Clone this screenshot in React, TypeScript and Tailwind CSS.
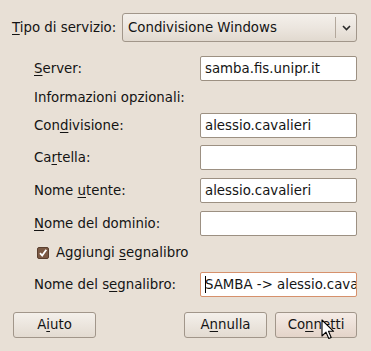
import React from "react";

const U = ({ children }: { children: React.ReactNode }) => (
  <span className="underline decoration-1 underline-offset-2">{children}</span>
);

function Entry({ value, focused }: { value?: string; focused?: boolean }) {
  return (
    <div
      className={
        "w-[157px] h-[25px] rounded-[2px] bg-white flex items-center pl-[4px] overflow-hidden whitespace-nowrap border " +
        (focused ? "border-[#d6916c]" : "border-[#9c9082]")
      }
    >
      {focused && <span className="w-px h-[17px] bg-black -mr-px shrink-0" />}
      <span>{value}</span>
    </div>
  );
}

function Row({ label, value, focused, mt }: { label: React.ReactNode; value?: string; focused?: boolean; mt: string }) {
  return (
    <div className={"flex items-center h-[25px] " + mt}>
      <div className="w-[166px]">{label}</div>
      <Entry value={value} focused={focused} />
    </div>
  );
}

function Btn({ children, w, hover }: { children: React.ReactNode; w: string; hover?: boolean }) {
  return (
    <div
      className={
        w +
        " h-[26px] rounded-[3px] border border-[#a1968a] flex items-center justify-center " +
        (hover
          ? "bg-gradient-to-b from-[#f5ece6] to-[#e4d4c9]"
          : "bg-gradient-to-b from-[#f4f0eb] to-[#e3dbd1]")
      }
    >
      {children}
    </div>
  );
}

export default function App() {
  return (
    <div
      className="w-[371px] h-[351px] bg-[#e8e0d6] text-[#141414] text-[13.33px] relative overflow-hidden"
      style={{ fontFamily: "'DejaVu Sans', sans-serif" }}
    >
      <div className="flex items-center pt-[13px] pl-[12px] pr-[14px]">
        <div className="w-[110px]">
          <U>T</U>ipo di servizio:
        </div>
        <div className="flex-1 h-[29px] rounded-[3px] border border-[#a1968a] bg-gradient-to-b from-[#f4f0eb] via-[#ece6df] to-[#e1d9cf] flex items-center">
          <div className="flex-1 pl-[5px]">Condivisione Windows</div>
          <div className="w-px h-[21px] bg-[#b3a89c]" />
          <div className="w-[20px] flex items-center justify-center">
            <svg width="9" height="6" viewBox="0 0 9 6">
              <path d="M1 1 L4.5 4.5 L8 1" fill="none" stroke="#2a2a2a" strokeWidth="1.6" />
            </svg>
          </div>
        </div>
      </div>

      <div className="pl-[34px] pr-[14px]">
        <Row mt="mt-[14px]" label={<><U>S</U>erver:</>} value="samba.fis.unipr.it" />
        <div className="mt-[7px] h-[20px] flex items-center">Informazioni opzionali:</div>
        <Row mt="mt-[5px]" label={<>Con<U>d</U>ivisione:</>} value="alessio.cavalieri" />
        <Row mt="mt-[7px]" label={<>Ca<U>r</U>tella:</>} />
        <Row mt="mt-[8px]" label={<>Nome <U>u</U>tente:</>} value="alessio.cavalieri" />
        <Row mt="mt-[8px]" label={<><U>N</U>ome del dominio:</>} />
        <div className="mt-[9px] h-[16px] flex items-center">
          <div className="ml-[3px] w-[12px] h-[12px] rounded-[2px] bg-[#7b5944] border border-[#5a3f2f] flex items-center justify-center">
            <svg width="10" height="10" viewBox="0 0 10 10">
              <path d="M2 5.2 L4.2 7.6 L8.3 1.8" fill="none" stroke="#ffffff" strokeWidth="1.8" />
            </svg>
          </div>
          <div className="ml-[7px]">
            Aggiungi <U>s</U>egnalibro
          </div>
        </div>
        <Row mt="mt-[11px]" label={<>Nome del s<U>e</U>gnalibro:</>} value="SAMBA -> alessio.cavalieri" focused />
      </div>

      <div className="flex items-center mt-[15px] pl-[13px] pr-[14px]">
        <Btn w="w-[83px]">
          A<U>i</U>uto
        </Btn>
        <div className="flex-1" />
        <Btn w="w-[83px]">
          A<U>n</U>nulla
        </Btn>
        <div className="w-[8px]" />
        <Btn w="w-[82px]" hover>
          Co<U>n</U>netti
        </Btn>
      </div>

      <svg className="absolute left-[321px] top-[319px]" width="14" height="22" viewBox="0 0 14 22">
        <path
          d="M1 1 L1 17 L5 13.2 L7.8 19.5 L10.2 18.5 L7.5 12.3 L12.6 12.3 Z"
          fill="#ffffff"
          stroke="#000000"
          strokeWidth="1.1"
          strokeLinejoin="round"
        />
      </svg>
    </div>
  );
}
